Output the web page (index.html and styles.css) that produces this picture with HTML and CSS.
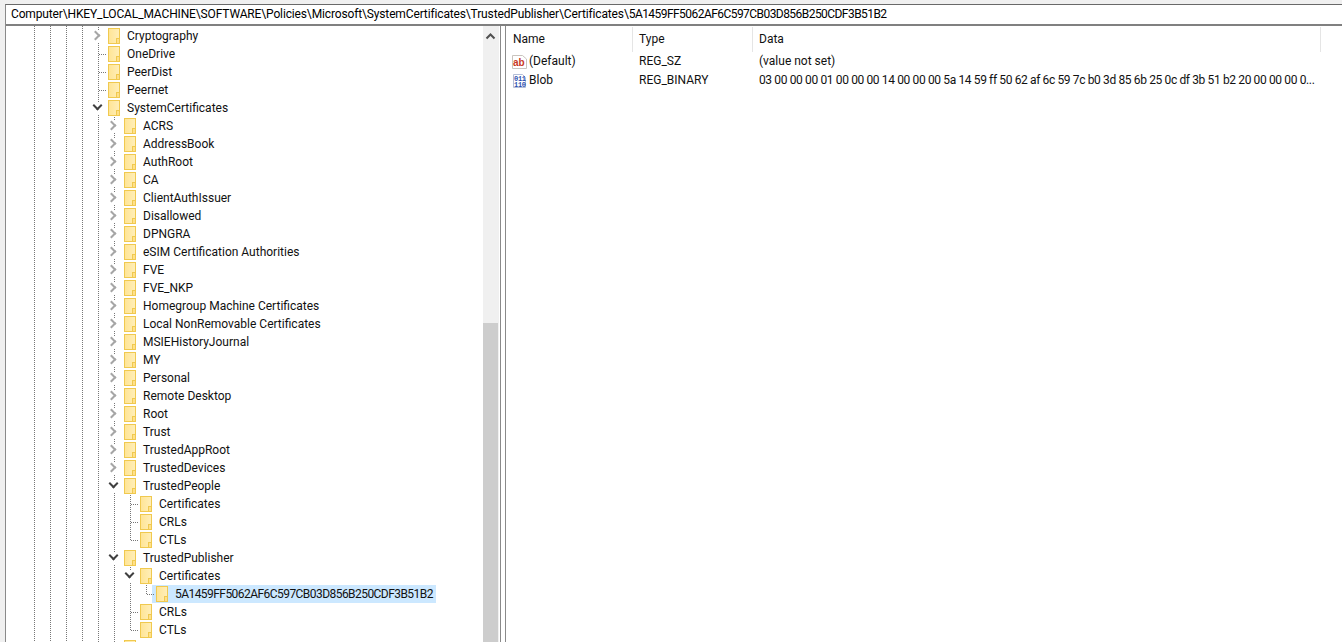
FILE: index.html
```html
<html>
  <head>
    <meta name="viewport" content="width=device-width, initial-scale=1" />
    <link rel="stylesheet" href="styles.css">
  </head>
  <body>
    <div class="window">
      <div class="address">Computer\HKEY_LOCAL_MACHINE\SOFTWARE\Policies\Microsoft\SystemCertificates\TrustedPublisher\Certificates\<span class="hash">5A1459FF5062AF6C597CB03D856B250CDF3B51B2</span></div>
      <div class="panes">
        <div class="tree">
          <div class="row"><i class="c r"></i><span class="node"><i class="folder"></i>Cryptography</span></div>
          <div class="row"><i class="c t"></i><span class="node"><i class="folder"></i>OneDrive</span></div>
          <div class="row"><i class="c t"></i><span class="node"><i class="folder"></i>PeerDist</span></div>
          <div class="row"><i class="c t"></i><span class="node"><i class="folder"></i>Peernet</span></div>
          <div class="row"><i class="c d"></i><span class="node"><i class="folder"></i>SystemCertificates</span></div>
          <div class="row"><i class="c g"></i><i class="c r"></i><span class="node"><i class="folder"></i>ACRS</span></div>
          <div class="row"><i class="c g"></i><i class="c r"></i><span class="node"><i class="folder"></i>AddressBook</span></div>
          <div class="row"><i class="c g"></i><i class="c r"></i><span class="node"><i class="folder"></i>AuthRoot</span></div>
          <div class="row"><i class="c g"></i><i class="c r"></i><span class="node"><i class="folder"></i>CA</span></div>
          <div class="row"><i class="c g"></i><i class="c r"></i><span class="node"><i class="folder"></i>ClientAuthIssuer</span></div>
          <div class="row"><i class="c g"></i><i class="c r"></i><span class="node"><i class="folder"></i>Disallowed</span></div>
          <div class="row"><i class="c g"></i><i class="c r"></i><span class="node"><i class="folder"></i>DPNGRA</span></div>
          <div class="row"><i class="c g"></i><i class="c r"></i><span class="node"><i class="folder"></i>eSIM Certification Authorities</span></div>
          <div class="row"><i class="c g"></i><i class="c r"></i><span class="node"><i class="folder"></i>FVE</span></div>
          <div class="row"><i class="c g"></i><i class="c r"></i><span class="node"><i class="folder"></i>FVE_NKP</span></div>
          <div class="row"><i class="c g"></i><i class="c r"></i><span class="node"><i class="folder"></i>Homegroup Machine Certificates</span></div>
          <div class="row"><i class="c g"></i><i class="c r"></i><span class="node"><i class="folder"></i>Local NonRemovable Certificates</span></div>
          <div class="row"><i class="c g"></i><i class="c r"></i><span class="node"><i class="folder"></i>MSIEHistoryJournal</span></div>
          <div class="row"><i class="c g"></i><i class="c r"></i><span class="node"><i class="folder"></i>MY</span></div>
          <div class="row"><i class="c g"></i><i class="c r"></i><span class="node"><i class="folder"></i>Personal</span></div>
          <div class="row"><i class="c g"></i><i class="c r"></i><span class="node"><i class="folder"></i>Remote Desktop</span></div>
          <div class="row"><i class="c g"></i><i class="c r"></i><span class="node"><i class="folder"></i>Root</span></div>
          <div class="row"><i class="c g"></i><i class="c r"></i><span class="node"><i class="folder"></i>Trust</span></div>
          <div class="row"><i class="c g"></i><i class="c r"></i><span class="node"><i class="folder"></i>TrustedAppRoot</span></div>
          <div class="row"><i class="c g"></i><i class="c r"></i><span class="node"><i class="folder"></i>TrustedDevices</span></div>
          <div class="row"><i class="c g"></i><i class="c d"></i><span class="node"><i class="folder"></i>TrustedPeople</span></div>
          <div class="row"><i class="c g"></i><i class="c g"></i><i class="c t"></i><span class="node"><i class="folder"></i>Certificates</span></div>
          <div class="row"><i class="c g"></i><i class="c g"></i><i class="c t"></i><span class="node"><i class="folder"></i>CRLs</span></div>
          <div class="row"><i class="c g"></i><i class="c g"></i><i class="c l"></i><span class="node"><i class="folder"></i>CTLs</span></div>
          <div class="row"><i class="c g"></i><i class="c d"></i><span class="node"><i class="folder"></i>TrustedPublisher</span></div>
          <div class="row"><i class="c g"></i><i class="c g"></i><i class="c d"></i><span class="node"><i class="folder"></i>Certificates</span></div>
          <div class="row"><i class="c g"></i><i class="c g"></i><i class="c g"></i><i class="c l"></i><span class="node selected"><i class="folder"></i><span class="hash">5A1459FF5062AF6C597CB03D856B250CDF3B51B2</span></span></div>
          <div class="row"><i class="c g"></i><i class="c g"></i><i class="c t"></i><span class="node"><i class="folder"></i>CRLs</span></div>
          <div class="row"><i class="c g"></i><i class="c g"></i><i class="c l"></i><span class="node"><i class="folder"></i>CTLs</span></div>
          <div class="row"><i class="c g"></i><i class="c r"></i><span class="node"><i class="folder"></i></span></div>
        </div>
        <div class="scrollbar">
          <svg class="arrow" width="16" height="21" viewBox="0 0 16 21"><path d="M3.5 12.5 L7.5 8.5 L11.5 12.5" fill="none" stroke="#505050" stroke-width="2"/></svg>
          <div class="thumb"></div>
        </div>
        <div class="divider"></div>
        <div class="values">
          <div class="values-head">
            <div class="col col-name">Name</div>
            <div class="col col-type">Type</div>
            <div class="col col-data">Data</div>
          </div>
          <div class="value">
            <div class="col-name cell-name">
              <svg class="vicon" width="16" height="16" viewBox="0 0 16 16">
                <path d="M0.5 1.5 H10.5 L14.5 5 V14.5 H0.5 Z" fill="#fff" stroke="#c9c4be"/>
                <text x="1" y="11.5" class="ab">ab</text>
              </svg>
              (Default)
            </div>
            <div class="col-type">REG_SZ</div>
            <div class="col-data">(value not set)</div>
          </div>
          <div class="value">
            <div class="col-name cell-name">
              <svg class="vicon" width="16" height="16" viewBox="0 0 16 16">
                <path d="M1.5 1.5 H10.5 L13.5 4.5 V14.5 H1.5 Z" fill="#fff" stroke="#b4bed8"/>
                <text x="2" y="7.5" class="bin">011</text>
                <text x="2" y="13.5" class="bin">110</text>
              </svg>
              Blob
            </div>
            <div class="col-type">REG_BINARY</div>
            <div class="col-data data-text">03 00 00 00 01 00 00 00 14 00 00 00 5a 14 59 ff 50 62 af 6c 59 7c b0 3d 85 6b 25 0c df 3b 51 b2 20 00 00 00 0...</div>
          </div>
        </div>
      </div>
    </div>
  </body>
</html>
```

FILE: styles.css
```css
html, body {
  margin: 0;
  height: 100%;
}
body {
  overflow: hidden;
  background: #f0f0f0;
  font-family: Roboto, sans-serif;
  font-size: 12px;
  color: #111;
}
.window {
  height: 638px;
  margin: 4px 0 0 5px;
  display: flex;
  flex-direction: column;
  background: #fff;
  border-left: 1px solid #8a8a8a;
  border-top: 1px solid #696969;
}
.address {
  height: 19px;
  line-height: 19px;
  padding-left: 5px;
  border-bottom: 2px solid #808080;
  color: #000;
  white-space: nowrap;
  letter-spacing: -0.14px;
}
.hash {
  letter-spacing: -0.55px;
}
.panes {
  flex: 1;
  display: flex;
  min-height: 0;
}

/* tree */
.tree {
  width: 477px;
  padding: 1px 0 0 84px;
  box-sizing: border-box;
  overflow: hidden;
  background-image:
    linear-gradient(#777 50%, transparent 50%),
    linear-gradient(#777 50%, transparent 50%),
    linear-gradient(#777 50%, transparent 50%),
    linear-gradient(#777 50%, transparent 50%);
  background-size: 1px 2px;
  background-position: 28px 0, 44px 0, 60px 0, 76px 0;
  background-repeat: repeat-y;
}
.row {
  display: flex;
  height: 18px;
  line-height: 18px;
  white-space: nowrap;
}
.c {
  position: relative;
  flex: none;
  width: 16px;
  height: 18px;
}
.g, .t, .r, .d {
  background: linear-gradient(#777 50%, transparent 50%) 8px 0 / 1px 2px repeat-y;
}
.t::after, .l::after {
  content: "";
  position: absolute;
  left: 9px;
  top: 9px;
  width: 7px;
  height: 1px;
  background: linear-gradient(90deg, #777 50%, transparent 50%) 0 0 / 2px 1px repeat-x;
}
.l::before {
  content: "";
  position: absolute;
  left: 8px;
  top: 0;
  width: 1px;
  height: 10px;
  background: linear-gradient(#777 50%, transparent 50%) 0 0 / 1px 2px repeat-y;
}
.r::before, .d::before {
  content: "";
  position: absolute;
  left: 2px;
  top: 3px;
  width: 13px;
  height: 12px;
  background: #fff;
}
.r::after, .d::after {
  content: "";
  position: absolute;
  width: 5px;
  height: 5px;
  border-top: 2px solid #a6a6a6;
  border-right: 2px solid #a6a6a6;
  transform: rotate(45deg);
  left: 2px;
  top: 5px;
}
.d::after {
  border-color: #404040;
  transform: rotate(135deg);
  left: 4px;
  top: 3px;
}
.node {
  display: flex;
  align-items: center;
  padding-right: 3px;
}
.folder {
  position: relative;
  flex: none;
  width: 10px;
  height: 14px;
  margin: 0 7px 0 2px;
  border: 1px solid #f0c94f;
  background: linear-gradient(90deg, #ffe596, #ffeeb8);
}
.folder::after {
  content: "";
  position: absolute;
  right: -1px;
  bottom: -1px;
  width: 2px;
  height: 4px;
  border: 1px solid #f0c94f;
  background: #ffe08a;
}
.selected {
  margin-left: -2px;
  padding-left: 2px;
  background: #cce8ff;
}

/* scroll bar and splitter */
.scrollbar {
  flex: none;
  display: flex;
  flex-direction: column;
  width: 16px;
  background: #f0f0f0;
}
.arrow {
  flex: none;
}
.thumb {
  flex: none;
  width: 15px;
  height: 340px;
  margin-top: 276px;
  background: #cdcdcd;
}
.divider {
  flex: none;
  width: 4px;
  margin-left: 1px;
  border-left: 1px solid #8a8a8a;
  border-right: 1px solid #8a8a8a;
}

/* value list */
.values {
  flex: 1;
}
.values-head {
  display: flex;
  height: 25px;
  padding-top: 1px;
  line-height: 24px;
}
.col {
  box-sizing: border-box;
  border-right: 1px solid #e5e5e5;
}
.col-name {
  flex: none;
  width: 127px;
  padding-left: 7px;
  box-sizing: border-box;
}
.col-type {
  flex: none;
  width: 120px;
  padding-left: 6px;
  box-sizing: border-box;
}
.col-data {
  flex: none;
  width: 568px;
  padding-left: 6px;
  box-sizing: border-box;
  white-space: nowrap;
}
.data-text {
  letter-spacing: -0.37px;
}
.value {
  display: flex;
  height: 19px;
  line-height: 19px;
}
.cell-name {
  display: flex;
  align-items: center;
  padding-left: 6px;
  gap: 1px;
}
.vicon {
  flex: none;
}
.ab {
  font: bold 10px "Liberation Sans", sans-serif;
  fill: #c8391f;
}
.bin {
  font: bold 7px "Liberation Mono", monospace;
  fill: #2b4fb0;
  letter-spacing: -0.3px;
}
```
